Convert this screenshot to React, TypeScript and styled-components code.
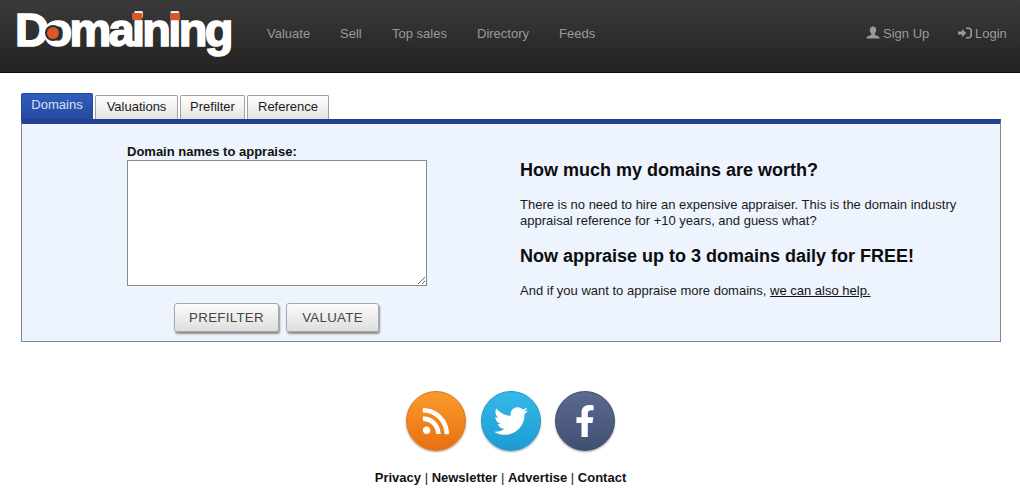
import React from "react";
import styled, { createGlobalStyle } from "styled-components";
import { FaRss, FaTwitter, FaFacebookF } from "react-icons/fa";

const Global = createGlobalStyle`
  html, body { margin: 0; padding: 0; background: #fff; font-family: "Liberation Sans", Arial, sans-serif; }
  body { width: 1020px; height: 494px; overflow: hidden; }
`;

const Header = styled.header`
  height: 66px;
  padding-bottom: 6px;
  border-bottom: 1px solid #0c0c0c;
  background: linear-gradient(#3a3a3a, #232323);
  display: flex;
  align-items: center;
  box-sizing: content-box;
`;
const Logo = styled.div`
  position: relative;
  width: 216px;
  margin-left: 15px;
  margin-right: 36px;
  margin-bottom: 8px;
  font-size: 47px;
  line-height: 47px;
  height: 47px;
  font-weight: 700;
  letter-spacing: -2.7px;
  color: #fff;
  -webkit-text-stroke: 1.6px #fff;
  white-space: nowrap;
`;
const LogoInitial = styled.span`
  letter-spacing: -5.5px;
`;
const LogoEye = styled.span`
  position: absolute;
  left: 32px;
  top: 21px;
  width: 12px;
  height: 12px;
  background: #d9582a;
  border-radius: 50%;
  box-shadow: 0 0 0 2px #2d2d2d;
`;
const LogoDot = styled.span<{ $x: number }>`
  position: absolute;
  left: ${(p) => p.$x}px;
  top: 7px;
  width: 10px;
  height: 7px;
  background: #d9582a;
  border-radius: 1px;
`;
const NavLink = styled.a<{ $w: number }>`
  width: ${(p) => p.$w}px;
  flex: none;
  font-size: 13px;
  color: #9a9a9a;
  display: inline-flex;
  align-items: center;
  white-space: nowrap;
`;
const Spacer = styled.div`
  flex: 1;
`;
const IconSlot = styled.svg<{ $gap: number }>`
  width: 14px;
  height: 14px;
  margin-right: ${(p) => p.$gap}px;
  fill: #9a9a9a;
  flex: none;
`;
const Main = styled.main`
  padding: 20px 19px 0 21px;
`;
const Tabs = styled.div`
  display: flex;
  align-items: flex-end;
  gap: 2px;
  height: 26px;
`;
const Tab = styled.div<{ $active?: boolean; $w: number }>`
  width: ${(p) => p.$w}px;
  height: ${(p) => (p.$active ? 26 : 24)}px;
  box-sizing: border-box;
  border: 1px solid ${(p) => (p.$active ? "#24479f" : "#a0a0a0")};
  border-bottom: none;
  border-radius: 2px 2px 0 0;
  background: ${(p) => (p.$active ? "linear-gradient(#2f5dbd,#254a9e)" : "linear-gradient(#fff,#e4e4e4)")};
  color: ${(p) => (p.$active ? "#d5e0f5" : "#1c1c1c")};
  font-size: 13px;
  line-height: 22px;
  text-align: center;
`;
const Panel = styled.section`
  height: 217px;
  box-sizing: content-box;
  border: 1px solid #7a8794;
  border-top: 5px solid #24418f;
  background: #edf4fd;
  display: flex;
`;
const FormCol = styled.div`
  width: 498px;
  padding: 19px 0 0 105px;
  box-sizing: border-box;
  flex: none;
`;
const FieldLabel = styled.label`
  display: block;
  font-size: 13px;
  line-height: 17px;
  font-weight: 700;
  color: #111;
`;
const TextBox = styled.textarea`
  display: block;
  width: 300px;
  height: 126px;
  box-sizing: border-box;
  margin: 0;
  background: #fff;
  border: 1px solid #8a8a8a;
  resize: both;
`;
const Buttons = styled.div`
  display: flex;
  gap: 7px;
  margin: 17px 0 0 47px;
`;
const Btn = styled.button<{ $w: number }>`
  width: ${(p) => p.$w}px;
  height: 29px;
  box-sizing: border-box;
  border: 1px solid #a8a8a8;
  border-radius: 3px;
  background: linear-gradient(#fcfcfc, #dedede);
  box-shadow: 1px 2px 2px #8d8d8d;
  font: 13.3px "Liberation Sans", Arial, sans-serif;
  letter-spacing: 0.3px;
  color: #444;
  padding: 0;
`;
const InfoCol = styled.div`
  padding-top: 36px;
  color: #111;
`;
const H = styled.h2<{ $mt?: number }>`
  margin: ${(p) => p.$mt ?? 0}px 0 0;
  font-size: 18px;
  line-height: 21px;
  font-weight: 700;
  color: #0c0c0c;
  white-space: nowrap;
`;
const P = styled.p<{ $mt: number }>`
  margin: ${(p) => p.$mt}px 0 0;
  font-size: 13px;
  line-height: 16px;
  width: 460px;
  color: #1a1a1a;
`;
const Help = styled.a`
  color: #111;
  text-decoration: underline;
`;
const Social = styled.div`
  display: flex;
  justify-content: center;
  gap: 14.5px;
  margin-top: 49px;
  padding-right: 1px;
`;
const Circle = styled.div<{ $a: string; $b: string; $ring: string }>`
  width: 60px;
  height: 60px;
  border-radius: 50%;
  background: linear-gradient(${(p) => p.$a}, ${(p) => p.$b});
  border: 1px solid ${(p) => p.$ring};
  box-sizing: border-box;
  box-shadow: 0 1px 2px rgba(0, 0, 0, 0.35);
  display: flex;
  align-items: center;
  justify-content: center;
  color: #fff;
`;
const FooterNav = styled.nav`
  margin-top: 19px;
  padding-right: 21px;
  text-align: center;
  font-size: 13px;
  line-height: 16px;
  color: #222;
  & b { color: #111; }
`;

export default function App() {
  return (
    <>
      <Global />
      <Header>
        <Logo>
          <LogoInitial>D</LogoInitial>omaining
          <LogoEye />
          <LogoDot $x={117} />
          <LogoDot $x={155} />
        </Logo>
        <NavLink $w={73}>Valuate</NavLink>
        <NavLink $w={52}>Sell</NavLink>
        <NavLink $w={85}>Top sales</NavLink>
        <NavLink $w={82}>Directory</NavLink>
        <NavLink $w={50}>Feeds</NavLink>
        <Spacer />
        <NavLink $w={92}>
          <IconSlot $gap={3} viewBox="0 0 14 14">
            <path d="M7 0.5c2 0 3.2 1.5 3.2 3.6 0 1.5-.6 2.8-1.500 3.500v1.200l3.400 1.400c1 .4 1.400 1.100 1.400 2.300H.5c0-1.200.4-1.900 1.400-2.300l3.400-1.400V7.600C4.400 6.900 3.800 5.600 3.800 4.100 3.800 2 5 .5 7 .5z" />
          </IconSlot>
          Sign Up
        </NavLink>
        <NavLink $w={62}>
          <IconSlot $gap={3} viewBox="0 0 14 14">
            <path d="M0 5.600h4V3l4.200 4-4.200 4V8.400H0z" />
            <path d="M8 1.500h2.500c2 0 3.500 1.500 3.500 3.500v4c0 2-1.500 3.500-3.500 3.500H8v-1.600h2.400c1.200 0 2-.8 2-2V5.100c0-1.200-.8-2-2-2H8z" />
          </IconSlot>
          Login
        </NavLink>
      </Header>
      <Main>
        <Tabs>
          <Tab $active $w={72}>Domains</Tab>
          <Tab $w={83}>Valuations</Tab>
          <Tab $w={65}>Prefilter</Tab>
          <Tab $w={82}>Reference</Tab>
        </Tabs>
        <Panel>
          <FormCol>
            <FieldLabel>Domain names to appraise:</FieldLabel>
            <TextBox aria-label="Domain names to appraise" />
            <Buttons>
              <Btn $w={105}>PREFILTER</Btn>
              <Btn $w={93}>VALUATE</Btn>
            </Buttons>
          </FormCol>
          <InfoCol>
            <H>How much my domains are worth?</H>
            <P $mt={16}>
              There is no need to hire an expensive appraiser. This is the domain industry appraisal reference for +10 years, and guess what?
            </P>
            <H $mt={17}>Now appraise up to 3 domains daily for FREE!</H>
            <P $mt={16}>
              And if you want to appraise more domains, <Help>we can also help.</Help>
            </P>
          </InfoCol>
        </Panel>
        <Social>
          <Circle $a="#f99a2c" $b="#ea6f12" $ring="#d9761c">
            <FaRss size={30} />
          </Circle>
          <Circle $a="#35b9e8" $b="#1d9cd3" $ring="#1f95c4">
            <FaTwitter size={34} />
          </Circle>
          <Circle $a="#5a6a90" $b="#414f72" $ring="#3d4a6b">
            <FaFacebookF size={32} />
          </Circle>
        </Social>
        <FooterNav>
          <b>Privacy</b> | <b>Newsletter</b> | <b>Advertise</b> | <b>Contact</b>
        </FooterNav>
      </Main>
    </>
  );
}
